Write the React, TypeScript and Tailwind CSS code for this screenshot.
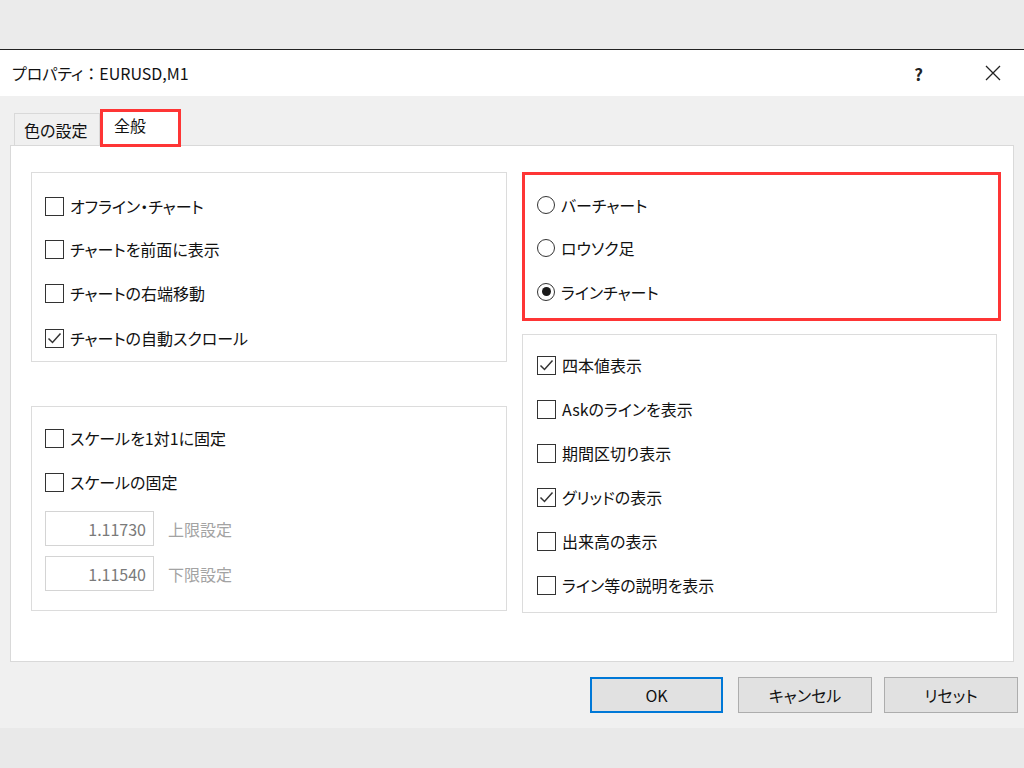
import React from "react";

const Check = ({ checked }: { checked?: boolean }) => (
  <div className="w-[19px] h-[19px] border-[1.5px] border-[#333] bg-white flex items-center justify-center shrink-0">
    {checked && (
      <svg width="15" height="15" viewBox="0 0 15 15">
        <polyline points="1.5,7.5 5.5,11.5 13.5,2.5" fill="none" stroke="#333" strokeWidth="1.5" />
      </svg>
    )}
  </div>
);

const Radio = ({ checked }: { checked?: boolean }) => (
  <div className="w-[18px] h-[18px] rounded-full border-[1.5px] border-[#333] bg-white flex items-center justify-center shrink-0">
    {checked && <div className="w-[9px] h-[9px] rounded-full bg-[#1a1a1a]" />}
  </div>
);

const CheckRow = ({ label, checked }: { label: string; checked?: boolean }) => (
  <div className="h-[44px] shrink-0 flex items-center gap-[6px]">
    <Check checked={checked} />
    <span className="text-[16px] leading-none text-[#111]">{label}</span>
  </div>
);

const RadioRow = ({ label, checked }: { label: string; checked?: boolean }) => (
  <div className="h-[43.5px] shrink-0 flex items-center gap-[6px]">
    <Radio checked={checked} />
    <span className="text-[16px] leading-none text-[#111]">{label}</span>
  </div>
);

const NumField = ({ value, label }: { value: string; label: string }) => (
  <div className="flex items-center gap-[14px]">
    <div className="w-[109px] h-[35px] border border-[#d4d4d4] bg-white flex items-center justify-end pr-[7px] text-[16px] leading-none text-[#7a7a7a]">
      {value}
    </div>
    <span className="text-[16px] leading-none text-[#a3a3a3]">{label}</span>
  </div>
);

export default function App() {
  return (
    <div className="w-[1024px] h-[768px] bg-[#ebebeb] flex flex-col font-['Noto_Sans_CJK_JP','Noto_Sans',sans-serif] [font-feature-settings:'palt'] overflow-hidden">
      <div className="h-[49px] bg-[#ebebeb] shrink-0" />
      <div className="h-px bg-[#222] shrink-0" />
      <div className="h-[46px] bg-white flex items-center pl-[12px] shrink-0 relative">
        <span className="text-[16px] leading-none text-[#111]">
          プロパティ<span className="[font-feature-settings:normal]">：</span>EURUSD,M1
        </span>
        <span className="ml-auto text-[17px] font-semibold leading-none text-[#222] mr-[62px]">?</span>
        <svg width="16" height="16" viewBox="0 0 16 16" className="mr-[23px]">
          <path d="M1 1 L15 15 M15 1 L1 15" stroke="#222" strokeWidth="1.3" fill="none" />
        </svg>
      </div>
      <div className="h-[632px] bg-[#f0f0f0] flex flex-col px-[10px] pt-[14px] shrink-0">
        <div className="h-[35px] flex items-end shrink-0">
          <div className="ml-[4px] w-[86px] h-[32px] border border-b-0 border-[#d9d9d9] bg-[#f0f0f0] flex items-center pl-[9px] text-[16px] leading-none text-[#111]">
            色の設定
          </div>
          <div className="relative z-10 w-[81px] h-[38px] -mb-[2px] bg-white border-[3px] border-[#fe3535] flex items-start pt-[5px] pl-[11px] text-[16px] leading-none text-[#111]">
            全般
          </div>
        </div>
        <div className="h-[517px] border border-[#d9d9d9] bg-white pl-[20px] pt-[26px] flex gap-[15px] shrink-0">
          <div className="w-[476px] flex flex-col">
            <div className="h-[190px] border border-[#dcdcdc] pl-[13px] pt-[11px] flex flex-col">
              <CheckRow label="オフライン・チャート" />
              <div className="-mt-px">
                <CheckRow label="チャートを前面に表示" />
              </div>
              <CheckRow label="チャートの右端移動" />
              <div className="mt-px">
                <CheckRow label="チャートの自動スクロール" checked />
              </div>
            </div>
            <div className="h-[205px] mt-[44px] border border-[#dcdcdc] pl-[13px] pt-[9px] flex flex-col">
              <CheckRow label="スケールを1対1に固定" />
              <CheckRow label="スケールの固定" />
              <div className="mt-[7px] flex flex-col gap-[10px]">
                <NumField value="1.11730" label="上限設定" />
                <NumField value="1.11540" label="下限設定" />
              </div>
            </div>
          </div>
          <div className="w-[479px] flex flex-col">
            <div className="h-[149px] border-[3px] border-[#fe3535] pl-[12px] pt-[8px] flex flex-col">
              <RadioRow label="バーチャート" />
              <RadioRow label="ロウソク足" />
              <RadioRow label="ラインチャート" checked />
            </div>
            <div className="w-[475px] h-[279px] mt-[13px] border border-[#dcdcdc] pl-[14px] pt-[8px] flex flex-col">
              <CheckRow label="四本値表示" checked />
              <CheckRow label="Askのラインを表示" />
              <CheckRow label="期間区切り表示" />
              <CheckRow label="グリッドの表示" checked />
              <CheckRow label="出来高の表示" />
              <CheckRow label="ライン等の説明を表示" />
            </div>
          </div>
        </div>
        <div className="mt-[15px] flex justify-end -mr-[4px]">
          <button className="w-[133px] h-[36px] border-2 border-[#0078d7] bg-[#e1e1e1] text-[16px] leading-none text-[#111]">
            OK
          </button>
          <button className="ml-[15px] w-[134px] h-[36px] border border-[#adadad] bg-[#e1e1e1] text-[16px] leading-none text-[#111]">
            キャンセル
          </button>
          <button className="ml-[12px] w-[134px] h-[36px] border border-[#adadad] bg-[#e1e1e1] text-[16px] leading-none text-[#111]">
            リセット
          </button>
        </div>
      </div>
      <div className="flex-1 bg-[#e9e9e9]" />
    </div>
  );
}
